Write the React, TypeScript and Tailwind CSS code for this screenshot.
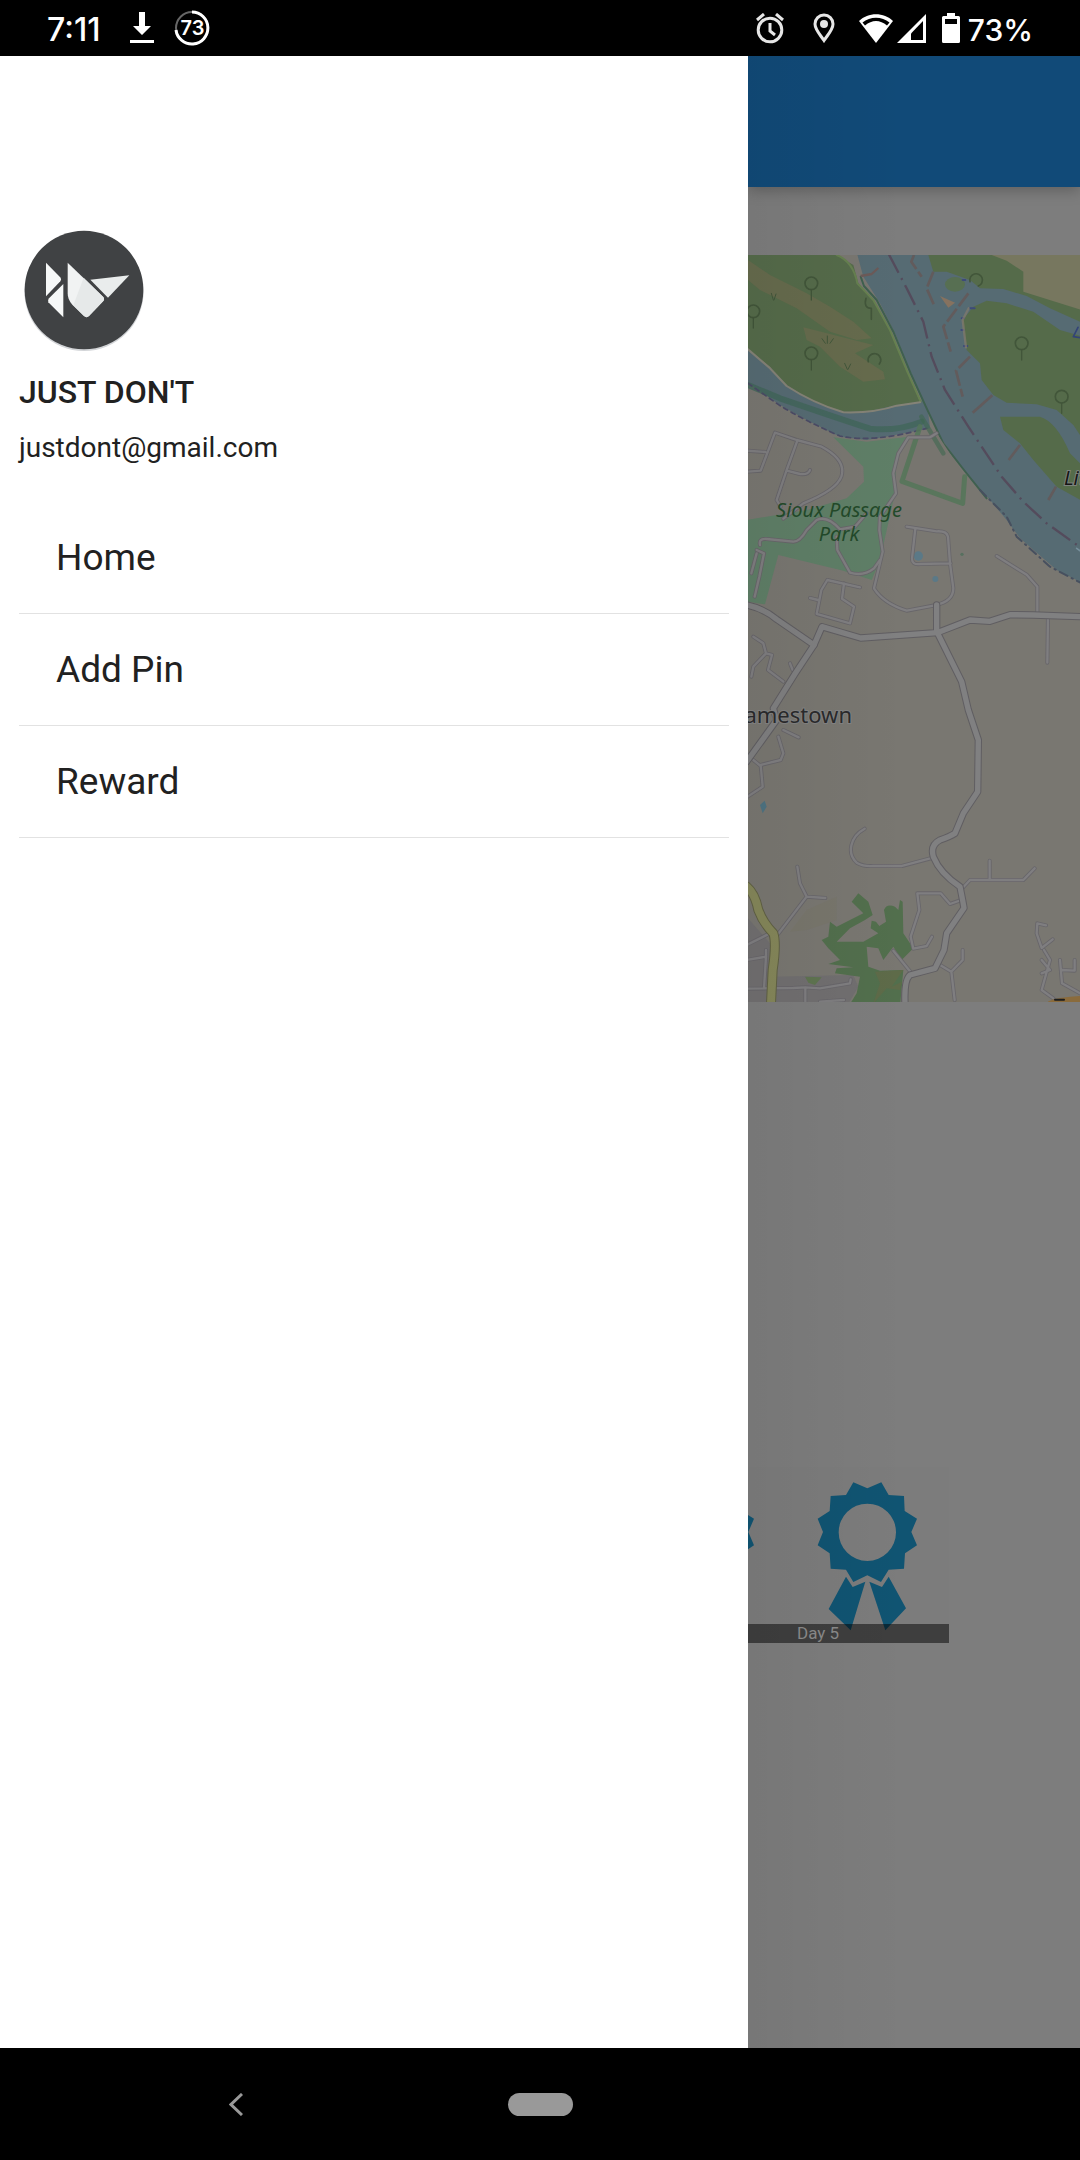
import React from "react";

const FONT = "font-['Roboto','Noto_Sans',sans-serif]";

function DownloadIcon() {
  return (
    <svg viewBox="0 0 24 32" className="h-8 w-6" fill="#fff" aria-hidden="true">
      <path d="M9 0h6v14h6l-9 9-9-9h6zM0 28h24v3H0z" />
    </svg>
  );
}

function AlarmIcon() {
  return (
    <svg viewBox="0 0 30 31" className="h-[31px] w-[30px]" fill="none" stroke="#e6e6e6" aria-hidden="true">
      <circle cx="15" cy="17" r="11.8" strokeWidth="3" />
      <path d="M15 10v8l5 4" strokeWidth="3" />
      <path d="M2 7l7-6M28 7l-7-6" strokeWidth="3" />
    </svg>
  );
}

function PinIcon() {
  return (
    <svg viewBox="0 0 22 30" className="h-[30px] w-[22px]" fill="none" stroke="#e6e6e6" aria-hidden="true">
      <path d="M11 27.500C7 21.500 2 16.500 2 11a9 9 0 0 1 18 0C20 16.500 15 21.500 11 27.500z" strokeWidth="3" />
      <circle cx="11" cy="11" r="4" fill="#e6e6e6" stroke="none" />
    </svg>
  );
}

function WifiIcon() {
  return (
    <svg viewBox="0 0 34 29" className="h-[29px] w-[34px]" aria-hidden="true">
      <path d="M0 7C9-2 25-2 34 7L17 29z" fill="#fff" />
      <path d="M3.500 8.500C11 2 23 2 30.500 8.500L28 11.500C21 5.500 13 5.500 6 11.500z" fill="#000" />
    </svg>
  );
}

function SignalIcon() {
  return (
    <svg viewBox="0 0 29 29" className="h-[29px] w-[29px]" aria-hidden="true">
      <path d="M0 29L29 0v29z" fill="#fff" />
      <path d="M14 26V19.500L26 7v19z" fill="#000" />
    </svg>
  );
}

function BatteryIcon() {
  return (
    <svg viewBox="0 0 18 30" className="h-[30px] w-[18px]" aria-hidden="true">
      <path d="M5 0h8v3h3.500Q18 3 18 4.500V28.500Q18 30 16.500 30H1.500Q0 30 0 28.500V4.500Q0 3 1.500 3H5z" fill="#fff" />
      <path d="M3 6h12v5H3z" fill="#000" />
    </svg>
  );
}

function StatusBar() {
  return (
    <header className="flex h-14 shrink-0 items-center bg-black px-[47px] font-['Inter',sans-serif] text-3xl leading-8 font-medium text-white">
      <span className="pt-1 text-[32px]">7:11</span>
      <span className="ml-[30px]">
        <DownloadIcon />
      </span>
      <span className="relative ml-5 flex h-9 w-9 items-center justify-center text-xl leading-5 font-semibold">
        <svg viewBox="0 0 36 36" className="absolute inset-0" fill="none" aria-hidden="true">
          <circle cx="18" cy="18" r="16" stroke="#666" strokeWidth="2" />
          <path d="M18 2A16 16 0 1 1 2 20" stroke="#fff" strokeWidth="3" />
        </svg>
        73
      </span>
      <span className="ml-auto flex items-center">
        <AlarmIcon />
        <span className="ml-7">
          <PinIcon />
        </span>
        <span className="ml-6">
          <WifiIcon />
        </span>
        <span className="ml-1">
          <SignalIcon />
        </span>
        <span className="ml-4">
          <BatteryIcon />
        </span>
        <span className="ml-2 pt-1">73%</span>
      </span>
    </header>
  );
}

function Avatar() {
  return (
    <svg viewBox="0 0 360 366" className="ml-[5px] h-[122px] w-[120px]" role="img" aria-label="Profile">
      <circle cx="180" cy="184" r="179" fill="#d3d5d8" />
      <circle cx="180" cy="180" r="178" fill="#404244" />
      <g fill="#f6f8f8" strokeLinejoin="round">
        <path d="M66 98L110 143Q113 149 109 154L66 199z" />
        <path d="M118 162V262L73 217Q70 211 75 205z" />
        <path d="M131 98L237 200Q243 206 238 213L195 258Q188 265 180 258L145 224Q131 210 131 190z" fill="#f1f3f3" />
        <path d="M179 143L237 200Q243 206 238 213L195 258Q188 265 180 258L148 226z" fill="#e6e9e9" />
        <path d="M199 149L316 136L252 203z" fill="#e9ecec" />
      </g>
    </svg>
  );
}

const menu = ["Home", "Add Pin", "Reward"];

function Drawer() {
  return (
    <aside className="w-[69.26%] shrink-0 bg-white px-[19px] pt-[174px] text-[#212121]">
      <Avatar />
      <h1 className="mt-5 text-[32px] leading-10 font-medium">JUST DON'T</h1>
      <p className="mt-4 text-[28px] leading-10">justdont@gmail.com</p>
      <nav className="mt-[34px]">
        <ul>
          {menu.map((item) => (
            <li key={item} className="border-b border-[#e2e2e2]">
              <a href="#" className="flex h-[111px] items-center pl-[37px] text-[37px] leading-10">
                {item}
              </a>
            </li>
          ))}
        </ul>
      </nav>
    </aside>
  );
}

const forest = "#556b4a";
const water = "#566b73";

const minorRoads = [
  "M20 632L76 636M20 695L62 692L105 578L170 600L245 620Q320 660 304 710Q290 750 190 790L130 836M172 602L140 690L110 780L122 800M140 692L180 702Q205 705 210 690",
  "M590 580L570 592L505 592L475 640L460 700L468 760L420 830L418 870L428 935L402 1045Q430 1090 500 1112L585 1096Q640 1085 640 1045L630 970L624 890Q620 872 590 874L500 860M526 866L516 955Q515 975 540 972L632 970",
  "M60 915Q55 895 80 897L160 905Q180 905 200 870L230 840Q262 825 300 868L345 860L380 820M290 890L292 930L330 998Q370 1010 402 985L420 960M50 930L72 940L58 1010L44 1070M50 940L34 1000",
  "M360 1042L262 1020L244 1050L230 1122L330 1150L342 1100L306 1076L312 1030M210 1074L234 1080",
  "M770 948L860 1004L892 1040V1125M924 1130L922 1268",
  "M40 1190L70 1210L78 1240L40 1280L34 1310M78 1240L96 1245L84 1290L130 1325M150 1270L158 1290M130 1470L176 1492",
  "M115 1490L130 1540L122 1560L62 1575L68 1640L20 1672M40 1560L62 1578",
  "M374 1766C330 1790 320 1840 350 1868Q370 1880 400 1878L486 1878L576 1854M172 1880L180 1930L200 1970L112 2085M200 1970L256 1974M664 1948L690 1920H850L884 1885M749 1920V1862",
  "M664 1980L630 1992L602 1960L532 1960L538 2010L512 2090L520 2126L560 2118L576 2090M460 2132L510 2194M600 2175L634 2195L668 2160V2130M634 2195L644 2280",
  "M890 2080L892 2050L918 2056M890 2080L905 2124L938 2098M912 2130L930 2160L905 2250L940 2275M905 2160L930 2190L905 2200M960 2160L966 2230L1020 2260M966 2190L1004 2192V2160",
  "M20 2246L160 2244L196 2242L240 2245L330 2230L332 2218M196 2244V2290M20 2160L78 2150L72 2245M20 2115L82 2084M78 2130V2150M240 2285L312 2280",
];

const majorRoads = [
  "M20 1095Q70 1105 110 1138L222 1215L246 1160L362 1194L592 1178L690 1140L750 1144L810 1124L880 1125L1030 1130M590 1178V1095",
  "M222 1215L166 1300L100 1405L110 1440L20 1565",
  "M592 1178L665 1325L685 1410L715 1500L713 1655L670 1720L645 1780Q630 1790 600 1800Q570 1815 580 1850Q600 1900 660 1940Q670 1990 672 2004L620 2080L612 2130L585 2185L510 2205Q492 2220 495 2290",
];

const trees = [
  [214, 130],
  [40, 214],
  [214, 340],
  [845, 310],
  [965, 470],
];

function MapView() {
  return (
    <svg
      viewBox="8 15 332 747"
      preserveAspectRatio="xMinYMid slice"
      className="block h-[747px] w-full"
      role="img"
      aria-label="Map of Jamestown and Sioux Passage Park"
    >
      <rect x="0" y="0" width="340" height="770" fill="#797771" />
      <g transform="scale(0.33333)" fill="none" strokeLinejoin="round" strokeLinecap="round">
        <path
          fill={water}
          d="M340 0L370 110L420 190L470 290L510 400L550 490L600 590L650 660L690 715L750 780L800 840L840 895L950 990L1030 1030V0z"
        />
        <path fill={water} d="M20 320L140 430L310 510L560 480L570 565L450 588L380 600L300 590L200 540L120 495L20 425z" />
        <path
          fill={forest}
          d="M20 0H270L290 45L340 75L355 130L400 180L450 270L500 390L540 485L470 495L380 515H310L220 485L140 435L90 380L20 325z"
        />
        <path fill={forest} d="M565 0V45L580 95H620L690 120L720 145L790 147L860 168L930 205L1030 250V0z" />
        <path fill="#77775f" d="M700 0L755 45L800 62L850 95V155L1030 212V0z" />
        <path
          fill={forest}
          d="M1030 290L960 270L880 215L800 190L740 182L700 200L668 240L680 330L720 370L725 420L760 465L800 488L890 493L950 510L1000 555L1030 600z"
        />
        <path fill={forest} d="M780 530H900Q950 545 990 640L1030 680V785L950 740L880 660L840 610L790 570z" />
        <ellipse cx="645" cy="133" rx="30" ry="22" fill="#576f52" />
        <path fill="#86725f" d="M600 168L645 188L625 203z" />
        <path
          fill="#666b4d"
          d="M24 60L90 105L200 160L270 200L340 245L395 295L350 300L270 275L170 205L60 150L24 120zM190 262L400 315L345 340L430 395L435 418L370 425L300 380L240 320L200 300z"
        />
        <path d="M290 45Q340 65 352 130L400 180L450 270L500 390L542 485" stroke="#668050" strokeWidth="6" />
        <path d="M362 110L372 138L410 180L460 275L512 400L560 505L610 610L672 690L740 775" stroke="#3f604f" strokeWidth="6" />
        <path d="M24 328L90 385L140 438Q220 490 310 517Q400 520 470 497L540 487" stroke="#858377" strokeWidth="6" />
        <path d="M24 435L120 475Q280 530 390 566Q470 575 545 545" stroke="#41675a" strokeWidth="18" opacity="0.8" />
        <path d="M24 430L120 497Q200 545 300 588Q400 610 560 565" stroke="#4b4b66" strokeWidth="5" strokeDasharray="14 12" />
        <path d="M720 750L800 830L830 890L930 980L1025 1030" stroke="#47505f" strokeWidth="6" strokeDasharray="26 14 4 14" />
        <path d="M362 108L395 102L415 84" stroke="#6c5a58" strokeWidth="7" strokeLinecap="butt" />
        <path d="M522 45L514 65L545 110M580 95L560 145L582 195M685 160L610 260L632 335M690 350L648 392L668 470" stroke="#625b5c" strokeWidth="8" strokeDasharray="48 10" strokeLinecap="butt" />
        <path d="M757 466L698 518M840 615L806 660M948 740L925 780" stroke="#625b5c" strokeWidth="8" strokeLinecap="butt" />
        <path
          d="M445 40L500 145L550 245L575 350L615 450L685 560L785 710L850 785L920 850L1025 925"
          stroke="#544b5c"
          strokeWidth="7"
          strokeDasharray="66 18 6 18"
          strokeLinecap="butt"
        />
        <path d="M690 205H704M665 235H672M664 270H672M672 318H682M668 120H676" stroke="#3d4a7a" strokeWidth="6" />
        <path d="M686 205L668 240L678 322" stroke="#857a6c" strokeWidth="7" opacity="0.7" />

        <path
          fill="#5f7f67"
          d="M280 592L380 605L505 590L470 640L465 760L420 960L395 1020L310 992L115 945L75 1093L20 1085V840L110 825L200 810L320 775L372 725L370 680z"
        />
        <path fill="#77756f" d="M518 590L590 580L672 705L665 780L490 720z" />
        <path d="M540 560L486 724L668 790L674 710" stroke="#547558" strokeWidth="15" opacity="0.85" />
        <path d="M544 530L610 640" stroke="#3f6850" strokeWidth="14" opacity="0.6" />
        <circle cx="535" cy="948" r="14" fill="#5b7987" />
        <circle cx="586" cy="1017" r="9" fill="#5b7987" />
        <circle cx="666" cy="943" r="5" fill="#57705f" />
        <path fill="#4e7382" d="M60 1695L74 1682L80 1700L68 1720z" />

        <path fill="#716f70" d="M20 2030L90 2110L95 2210L340 2205L355 2240L320 2300H20z" />
        <path fill="#76745f" d="M150 2075L200 2010L290 1970V2040L200 2070z" opacity="0.3" />
        <path
          fill="#526f4d"
          d="M335 1985L355 1960L385 1985L398 2025L375 2040L330 2065L290 2105L370 2105L415 2080L392 2065L395 2042L408 2045L418 2058L438 2045L432 2010Q440 1990 465 2000L475 2010L480 1980L488 1985L490 2080L520 2125L485 2160L460 2120L430 2160L415 2125L380 2120L385 2180L420 2192L490 2190L480 2300H325L350 2260L360 2210L285 2200L290 2185L340 2182L265 2172L300 2160L265 2125L245 2100L265 2090L270 2045L290 2060L370 2020z"
        />
        <path fill="#5e6b49" d="M405 2195L490 2190L455 2240L485 2225L480 2250L440 2245L400 2290L420 2230z" />
        <path fill="#5f7450" d="M195 2210L245 2212L225 2235L205 2228z" />

        {minorRoads.map((d) => (
          <path key={d} d={d} stroke="#68666a" strokeWidth="12" />
        ))}
        {minorRoads.map((d) => (
          <path key={`${d}-fill`} d={d} stroke="#7f7e80" strokeWidth="7" />
        ))}
        {majorRoads.map((d) => (
          <path key={d} d={d} stroke="#605e62" strokeWidth="22" />
        ))}
        {majorRoads.map((d) => (
          <path key={`${d}-fill`} d={d} stroke="#808081" strokeWidth="16" />
        ))}
        <path d="M20 1940Q45 1960 55 2010Q70 2050 100 2080Q110 2110 98 2190L92 2310" stroke="#606144" strokeWidth="30" />
        <path d="M20 1940Q45 1960 55 2010Q70 2050 100 2080Q110 2110 98 2190L92 2310" stroke="#85875a" strokeWidth="24" />
        <path d="M925 2284Q960 2270 1030 2268V2300H920z" fill="#8a6b3c" />
        <path d="M945 2279L972 2279" stroke="#1d1d1d" strokeWidth="6" />

        {trees.map(([x, y]) => (
          <g key={`${x}-${y}`} stroke="#42563a" strokeWidth="5">
            <circle cx={x} cy={y} r="19" />
            <path d={`M${x} ${y + 20}v30`} strokeWidth="4" />
          </g>
        ))}
        <g stroke="#42563a" strokeWidth="5">
          <path d="M690 125A19 19 0 1 1 715 138M385 365A19 19 0 1 1 418 372M378 175Q370 205 394 205V238" />
          <path d="M262 310V288M256 310L246 296M270 310L280 296M100 180L94 160M102 180L108 162M322 388L314 370M324 388L332 372" strokeWidth="3" />
        </g>
        <path d="M1014 262L1000 290L1030 294" stroke="#334478" strokeWidth="5" />
        <path d="M1010 925L1030 940" stroke="#77909c" strokeWidth="5" />
      </g>
      <g className="font-['Noto_Sans',sans-serif] text-[20px]" textAnchor="middle">
        <g className="italic" fill="#234a2a">
          <text x="99" y="277">Sioux Passage</text>
          <text x="99" y="301">Park</text>
        </g>
        <text x="112" y="483" textAnchor="end" fill="#2a2a2c" stroke="#838383" strokeWidth="2" paintOrder="stroke" className="text-[22px]">
          Jamestown
        </text>
        <text x="324" y="245" textAnchor="start" fill="#151515" stroke="#7d837d" strokeWidth="2" paintOrder="stroke" className="italic">
          Little
        </text>
      </g>
    </svg>
  );
}

function DayTile({ label }: { label?: string }) {
  return (
    <figure className="relative h-[176px] w-[163px] shrink-0 bg-[#7c7c7c]">
      <svg viewBox="0 0 489 528" className="block h-full w-full" fill="#105472" aria-hidden="true">
        <path
          fillRule="evenodd"
          d="M202 46L244 64L286 46L308 84L354 87L356 132L393 155L376 195L393 235L357 259L354 305L308 308L285 345L244 325L202 345L180 308L134 305L131 259L95 235L111 195L95 155L131 132L134 87L180 84zM244 110a86 86 0 1 0 0 172a86 86 0 1 0 0-172z"
        />
        <path d="M180 329L200 360L238 344L194 490L128 426zM308 329L288 360L250 344L298 490L360 424z" />
      </svg>
      <figcaption className="absolute inset-x-0 bottom-0 h-[19px] bg-black/50 pl-[11px] text-[17px] leading-[19px] text-[#8a8a8a]">
        {label}
      </figcaption>
    </figure>
  );
}

function Page() {
  return (
    <main className="relative flex min-w-0 flex-1 flex-col overflow-hidden bg-[#7d7d7d]">
      <div className="z-10 h-[131px] shrink-0 bg-[#114a78] shadow-[0_3px_14px_rgba(0,0,0,0.25)]" />
      <div className="mt-[68px]">
        <MapView />
      </div>
      <div className="mt-[465px] mr-[131px] flex justify-end">
        <DayTile />
        <DayTile label="Day 5" />
      </div>
      <div className="pointer-events-none absolute inset-y-0 left-0 z-20 w-40 bg-linear-to-r from-black/5 to-transparent" />
    </main>
  );
}

function NavigationBar() {
  return (
    <footer className="grid h-28 shrink-0 grid-cols-[1fr_auto_1fr] items-center bg-black">
      <button type="button" aria-label="Back" className="justify-self-center pr-[35px]">
        <svg viewBox="0 0 14 23" className="h-[23px] w-[14px]" fill="none" stroke="#999" strokeWidth="3" aria-hidden="true">
          <path d="M13 1L2 11.500L13 22" />
        </svg>
      </button>
      <button type="button" aria-label="Home screen" className="h-[23px] w-[65px] rounded-full bg-[#999]" />
    </footer>
  );
}

export default function App() {
  return (
    <div className={`flex min-h-screen flex-col bg-black ${FONT}`}>
      <StatusBar />
      <div className="flex flex-1">
        <Drawer />
        <Page />
      </div>
      <NavigationBar />
    </div>
  );
}
